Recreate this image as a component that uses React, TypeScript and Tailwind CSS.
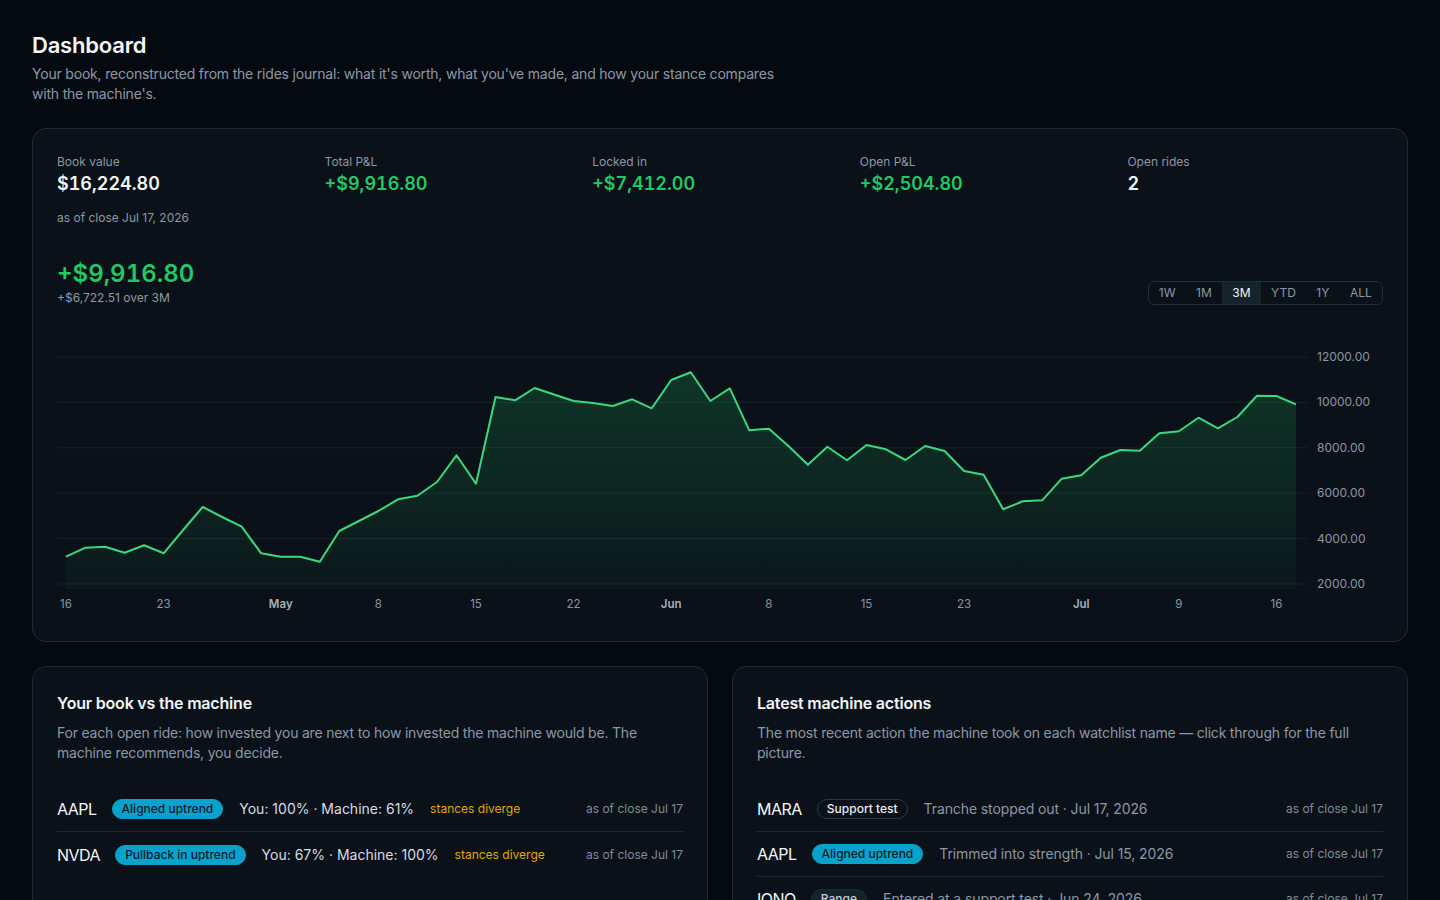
import React from "react";

const VALUES = [
  3203, 3599, 3643, 3379, 3705, 3352, 4379, 5392, 4951, 4524, 3352, 3203, 3203, 2982, 4335, 4775,
  5216, 5731, 5890, 6493, 7669, 6418, 10237, 10092, 10634, 10348, 10061, 9973, 9841, 10136, 9740,
  10986, 11325, 10061, 10621, 8771, 8841, 8079, 7255, 8048, 7449, 8123, 7934, 7462, 8079, 7859,
  6978, 6815, 5291, 5643, 5687, 6638, 6788, 7564, 7903, 7872, 8638, 8727, 9326, 8859, 9356, 10295,
  10281, 9916.8,
];

const X0 = 9;
const STEP = 19.524;
const yOf = (v: number) => 16 + ((12000 - v) / 10000) * 227;

const X_LABELS: { i: number; t: string; bold?: boolean }[] = [
  { i: 0, t: "16" },
  { i: 5, t: "23" },
  { i: 11, t: "May", bold: true },
  { i: 16, t: "8" },
  { i: 21, t: "15" },
  { i: 26, t: "22" },
  { i: 31, t: "Jun", bold: true },
  { i: 36, t: "8" },
  { i: 41, t: "15" },
  { i: 46, t: "23" },
  { i: 52, t: "Jul", bold: true },
  { i: 57, t: "9" },
  { i: 62, t: "16" },
];

const Y_TICKS = [12000, 10000, 8000, 6000, 4000, 2000];

function Chart() {
  const pts = VALUES.map((v, i) => [X0 + i * STEP, yOf(v)] as const);
  const line = pts.map((p, i) => `${i === 0 ? "M" : "L"}${p[0].toFixed(1)},${p[1].toFixed(1)}`).join(" ");
  const last = pts[pts.length - 1];
  const area = `${line} L${last[0].toFixed(1)},248 L${X0},248 Z`;
  return (
    <svg width={1326} height={276} viewBox="0 0 1326 276" className="block" style={{ fontFamily: "Inter, 'Noto Sans', sans-serif" }}>
      <defs>
        <linearGradient id="pnlFill" x1="0" y1="0" x2="0" y2="1">
          <stop offset="0%" stopColor="#22c55e" stopOpacity="0.2" />
          <stop offset="100%" stopColor="#22c55e" stopOpacity="0.04" />
        </linearGradient>
      </defs>
      {Y_TICKS.map((t) => (
        <g key={t}>
          <line x1={0} x2={1251} y1={yOf(t)} y2={yOf(t)} stroke="#15232b" strokeWidth={1} />
          <text x={1260} y={yOf(t) + 4} fontSize={12} fill="#8a96a1">
            {t.toFixed(2)}
          </text>
        </g>
      ))}
      <path d={area} fill="url(#pnlFill)" />
      <path d={line} fill="none" stroke="#3bd97f" strokeWidth={2} strokeLinejoin="round" />
      {X_LABELS.map((l) => (
        <text
          key={l.i + l.t}
          x={X0 + l.i * STEP}
          y={267}
          fontSize={11.5}
          textAnchor="middle"
          fill={l.bold ? "#a7b1ba" : "#8a96a1"}
          fontWeight={l.bold ? 600 : 400}
        >
          {l.t}
        </text>
      ))}
    </svg>
  );
}

function Stat({ label, value, green }: { label: string; value: string; green?: boolean }) {
  return (
    <div>
      <div className="text-xs leading-4 text-[#8c98a4]">{label}</div>
      <div className={`text-lg leading-7 font-semibold tabular-nums ${green ? "text-[#22c863]" : "text-[#f1f5f9]"}`}>
        {value}
      </div>
    </div>
  );
}

const RANGES = ["1W", "1M", "3M", "YTD", "1Y", "ALL"];

function Pill({ children, kind }: { children: React.ReactNode; kind: "cyan" | "outline" | "muted" }) {
  const cls =
    kind === "cyan"
      ? "bg-[#0aa2cb] text-[#05202b] border-[#0aa2cb]"
      : kind === "outline"
      ? "border-[#2a3a44] text-[#e8edf1] bg-transparent"
      : "border-[#1c2a33] bg-[#17232b] text-[#c3ccd4]";
  return (
    <span
      className={`inline-flex items-center h-5 px-[9px] rounded-full border text-xs font-medium leading-4 whitespace-nowrap ${cls}`}
    >
      {children}
    </span>
  );
}

function BookRow({ t, badge, text, last }: { t: string; badge: string; text: string; last?: boolean }) {
  return (
    <div className={`flex items-center gap-4 h-[45px] ${last ? "" : "border-b border-[#1e2b33]"}`}>
      <span className="text-base tracking-[-0.5px] text-[#f1f5f9] -mr-[1px]">{t}</span>
      <Pill kind="cyan">{badge}</Pill>
      <span className="text-sm text-[#d5dce2]">{text}</span>
      <span className="text-xs text-[#e0a800]">stances diverge</span>
      <span className="ml-auto text-xs text-[#7f8c97]">as of close Jul 17</span>
    </div>
  );
}

function ActionRow({
  t,
  badge,
  kind,
  text,
  last,
}: {
  t: string;
  badge: string;
  kind: "cyan" | "outline" | "muted";
  text: string;
  last?: boolean;
}) {
  return (
    <div className={`flex items-center gap-4 h-[45px] ${last ? "" : "border-b border-[#1e2b33]"}`}>
      <span className="text-base tracking-[-0.5px] text-[#f1f5f9] -mr-[1px]">{t}</span>
      <Pill kind={kind}>{badge}</Pill>
      <span className="text-sm tracking-[-0.1px] text-[#8c98a4]">{text}</span>
      <span className="ml-auto text-xs text-[#7f8c97]">as of close Jul 17</span>
    </div>
  );
}

export default function App() {
  return (
    <div
      className="min-h-screen bg-[#050a11] text-[#e5e9ee] px-8 pt-[29px] pb-8"
      style={{ fontFamily: "Inter, 'Noto Sans', 'Liberation Sans', sans-serif" }}
    >
      <h1 className="text-[22px] leading-8 font-semibold tracking-[-0.2px] text-[#f5f7fa]">Dashboard</h1>
      <p className="mt-[3px] max-w-3xl text-sm leading-5 tracking-[-0.2px] text-[#8c98a4]">
        Your book, reconstructed from the rides journal: what it's worth, what you've made, and how your stance compares
        with the machine's.
      </p>

      <section className="mt-6 rounded-[14px] border border-[#1c2b34] bg-[#0a1119] px-6 pt-[25px] pb-6">
        <div className="grid grid-cols-5 gap-3">
          <Stat label="Book value" value="$16,224.80" />
          <Stat label="Total P&L" value="+$9,916.80" green />
          <Stat label="Locked in" value="+$7,412.00" green />
          <Stat label="Open P&L" value="+$2,504.80" green />
          <Stat label="Open rides" value="2" />
        </div>
        <div className="mt-3 text-xs leading-4 text-[#8c98a4]">as of close Jul 17, 2026</div>

        <div className="mt-8 flex items-end justify-between">
          <div>
            <div className="text-2xl leading-8 font-semibold tabular-nums text-[#22c863]">+$9,916.80</div>
            <div className="text-xs leading-4 text-[#8c98a4]">+$6,722.51 over 3M</div>
          </div>
          <div className="flex items-stretch h-6 rounded-md border border-[#1f2e37] overflow-hidden mb-[1px]">
            {RANGES.map((r) => (
              <span
                key={r}
                className={`flex items-center px-[10.25px] text-xs ${
                  r === "3M" ? "bg-[#16232b] text-[#f1f5f9]" : "text-[#8c98a4]"
                }`}
              >
                {r}
              </span>
            ))}
          </div>
        </div>

        <div className="mt-[35px]">
          <Chart />
        </div>
      </section>

      <div className="mt-6 grid grid-cols-2 gap-6">
        <section className="rounded-[14px] border border-[#1c2b34] bg-[#0a1119] p-6">
          <h2 className="text-base leading-6 font-semibold tracking-[-0.2px] text-[#f1f5f9]">Your book vs the machine</h2>
          <p className="mt-2 text-sm leading-5 tracking-[-0.2px] text-[#8c98a4]">
            For each open ride: how invested you are next to how invested the machine would be. The machine recommends,
            you decide.
          </p>
          <div className="mt-6">
            <BookRow t="AAPL" badge="Aligned uptrend" text="You: 100% · Machine: 61%" />
            <BookRow t="NVDA" badge="Pullback in uptrend" text="You: 67% · Machine: 100%" last />
          </div>
        </section>

        <section className="rounded-[14px] border border-[#1c2b34] bg-[#0a1119] p-6">
          <h2 className="text-base leading-6 font-semibold tracking-[-0.2px] text-[#f1f5f9]">Latest machine actions</h2>
          <p className="mt-2 text-sm leading-5 tracking-[-0.2px] text-[#8c98a4]">
            The most recent action the machine took on each watchlist name — click through for the full picture.
          </p>
          <div className="mt-6">
            <ActionRow t="MARA" badge="Support test" kind="outline" text="Tranche stopped out · Jul 17, 2026" />
            <ActionRow t="AAPL" badge="Aligned uptrend" kind="cyan" text="Trimmed into strength · Jul 15, 2026" />
            <ActionRow t="IONQ" badge="Range" kind="muted" text="Entered at a support test · Jun 24, 2026" />
            <ActionRow t="TSLA" badge="Range" kind="muted" text="Entered at a support test · Jun 20, 2026" last />
          </div>
        </section>
      </div>
    </div>
  );
}
